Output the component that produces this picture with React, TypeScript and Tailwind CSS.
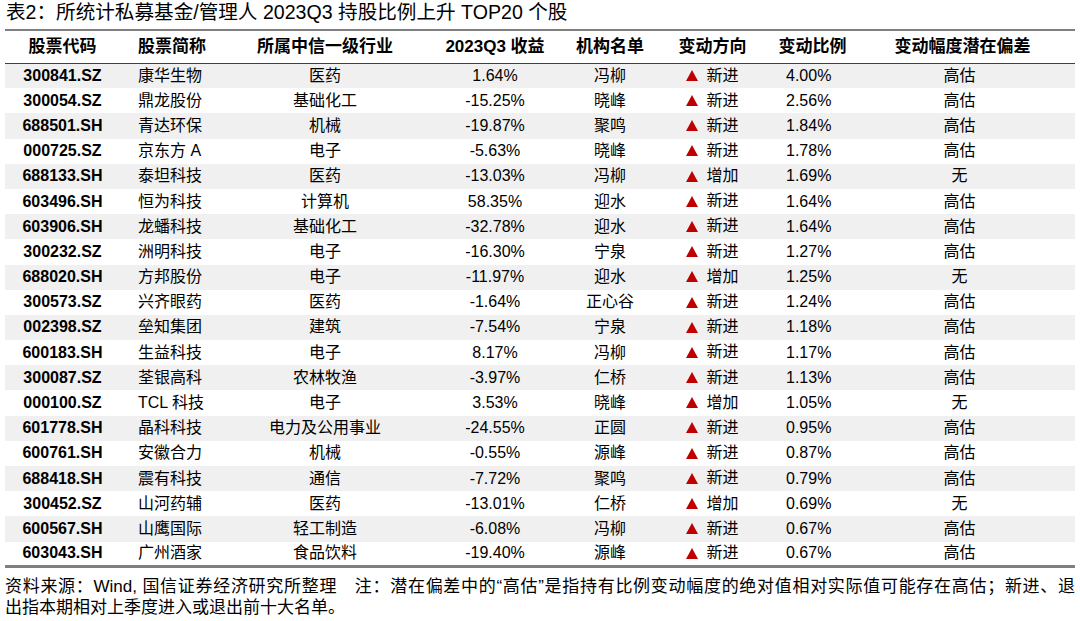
import React from "react";

type Row = [string, string, string, string, string, string, string, string];

const rows: Row[] = [
  ["300841.SZ", "康华生物", "医药", "1.64%", "冯柳", "新进", "4.00%", "高估"],
  ["300054.SZ", "鼎龙股份", "基础化工", "-15.25%", "晓峰", "新进", "2.56%", "高估"],
  ["688501.SH", "青达环保", "机械", "-19.87%", "聚鸣", "新进", "1.84%", "高估"],
  ["000725.SZ", "京东方 A", "电子", "-5.63%", "晓峰", "新进", "1.78%", "高估"],
  ["688133.SH", "泰坦科技", "医药", "-13.03%", "冯柳", "增加", "1.69%", "无"],
  ["603496.SH", "恒为科技", "计算机", "58.35%", "迎水", "新进", "1.64%", "高估"],
  ["603906.SH", "龙蟠科技", "基础化工", "-32.78%", "迎水", "新进", "1.64%", "高估"],
  ["300232.SZ", "洲明科技", "电子", "-16.30%", "宁泉", "新进", "1.27%", "高估"],
  ["688020.SH", "方邦股份", "电子", "-11.97%", "迎水", "增加", "1.25%", "无"],
  ["300573.SZ", "兴齐眼药", "医药", "-1.64%", "正心谷", "新进", "1.24%", "高估"],
  ["002398.SZ", "垒知集团", "建筑", "-7.54%", "宁泉", "新进", "1.18%", "高估"],
  ["600183.SH", "生益科技", "电子", "8.17%", "冯柳", "新进", "1.17%", "高估"],
  ["300087.SZ", "荃银高科", "农林牧渔", "-3.97%", "仁桥", "新进", "1.13%", "高估"],
  ["000100.SZ", "TCL 科技", "电子", "3.53%", "晓峰", "增加", "1.05%", "无"],
  ["601778.SH", "晶科科技", "电力及公用事业", "-24.55%", "正圆", "新进", "0.95%", "高估"],
  ["600761.SH", "安徽合力", "机械", "-0.55%", "源峰", "新进", "0.87%", "高估"],
  ["688418.SH", "震有科技", "通信", "-7.72%", "聚鸣", "新进", "0.79%", "高估"],
  ["300452.SZ", "山河药辅", "医药", "-13.01%", "仁桥", "增加", "0.69%", "无"],
  ["600567.SH", "山鹰国际", "轻工制造", "-6.08%", "冯柳", "新进", "0.67%", "高估"],
  ["603043.SH", "广州酒家", "食品饮料", "-19.40%", "源峰", "新进", "0.67%", "高估"],
];

const Tri = () => (
  <svg width="12" height="11" viewBox="0 0 12 11" className="inline-block">
    <polygon points="6,0 12,11 0,11" fill="#c00000" />
  </svg>
);

export default function App() {
  return (
    <div
      className="w-[1080px] h-[621px] bg-white text-black overflow-hidden"
      style={{ fontFamily: '"Liberation Sans", "Noto Sans CJK SC", sans-serif' }}
    >
      <div className="h-[29px] pl-[6px] text-[19.6px] leading-[25px]">
        表2：所统计私募基金/管理人 2023Q3 持股比例上升 TOP20 个股
      </div>
      <div className="mx-[5px] w-[1070px]">
        <table className="w-[1070px] table-fixed border-collapse">
          <colgroup>
            <col className="w-[115px]" />
            <col className="w-[110px]" />
            <col className="w-[190px]" />
            <col className="w-[150px]" />
            <col className="w-[80px]" />
            <col className="w-[125px]" />
            <col className="w-[75px]" />
            <col className="w-[225px]" />
          </colgroup>
          <thead>
            <tr className="h-[33px] border-t-[2px] border-b border-t-[#7f7f7f] border-b-[#404040] text-[17px] font-bold">
              <th className="text-center p-0 font-bold">股票代码</th>
              <th className="text-left pl-[18px] p-0 font-bold">股票简称</th>
              <th className="text-center p-0 font-bold">所属中信一级行业</th>
              <th className="text-center p-0 font-bold">2023Q3 收益</th>
              <th className="text-center p-0 font-bold">机构名单</th>
              <th className="text-center p-0 font-bold">变动方向</th>
              <th className="text-center p-0 font-bold">变动比例</th>
              <th className="text-center p-0 font-bold">变动幅度潜在偏差</th>
            </tr>
          </thead>
          <tbody className="border-b-[3px] border-b-[#7f7f7f]">
            {rows.map((r, i) => (
              <tr
                key={r[0]}
                className={`h-[25.2px] text-[16px] leading-[20px] ${i % 2 === 0 ? "bg-[#f0f0f0]" : "bg-white"}`}
              >
                <td className="text-center p-0 font-bold">{r[0]}</td>
                <td className="text-left pl-[18px] p-0">{r[1]}</td>
                <td className="text-center p-0">{r[2]}</td>
                <td className="text-center p-0">{r[3]}</td>
                <td className="text-center p-0">{r[4]}</td>
                <td className="text-center p-0">
                  <span className="inline-flex items-center gap-[8px]">
                    <Tri />
                    <span>{r[5]}</span>
                  </span>
                </td>
                <td className="text-left pl-[11px] p-0">{r[6]}</td>
                <td className="text-center pr-[6px] p-0">{r[7]}</td>
              </tr>
            ))}
          </tbody>
        </table>
        <div className="mt-[8px] text-[17px] leading-[21px]">
          <div className="text-justify [text-align-last:justify] whitespace-nowrap">
            资料来源：Wind, 国信证券经济研究所整理　注：潜在偏差中的“高估”是指持有比例变动幅度的绝对值相对实际值可能存在高估；新进、退
          </div>
          <div>出指本期相对上季度进入或退出前十大名单。</div>
        </div>
      </div>
    </div>
  );
}
